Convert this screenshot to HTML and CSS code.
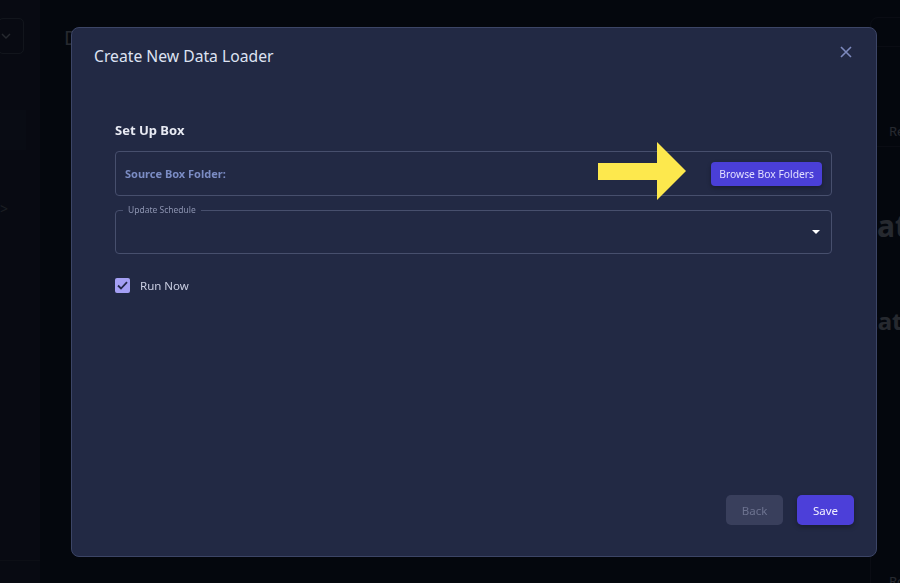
FILE: index.html
```html
<!DOCTYPE html>
<html lang="en">

<head>
    <meta charset="UTF-8">
    <meta name="viewport" content="width=device-width, initial-scale=1.0">
    <title>Data Loaders</title>
    <link rel="stylesheet" href="styles.css">
</head>

<body>
    <!-- page behind the dialog -->
    <div class="app">
        <aside class="sidebar">
            <div class="side-select">
                <svg width="10" height="10" viewBox="0 0 10 10"><path d="M1 3 L5 7 L9 3" fill="none" stroke="#c8ccd8" stroke-width="1.4"/></svg>
            </div>
            <div class="side-item"></div>
            <div class="side-arrow">&gt;</div>
            <div class="side-line"></div>
        </aside>
        <main class="main">
            <h2 class="page-title">Data Loaders</h2>
            <div class="content">
                <div class="left-area"></div>
                <div class="panel">
                    <div class="panel-head"></div>
                    <div class="panel-tab">Recent</div>
                    <div class="panel-big">Data</div>
                    <div class="panel-big second">Static</div>
                    <div class="panel-foot">Rows per page</div>
                </div>
            </div>
        </main>
    </div>

    <div class="backdrop"></div>

    <div class="modal">
        <div class="modal-header">
            <h1>Create New Data Loader</h1>
            <button class="close-btn" aria-label="close">
                <svg width="12" height="12" viewBox="0 0 12 12"><path d="M1 1 L11 11 M11 1 L1 11" stroke="#7d89bd" stroke-width="1.6"/></svg>
            </button>
        </div>

        <div class="modal-body">
            <div class="section-title">Set Up Box</div>

            <div class="source-box">
                <span class="source-label">Source Box Folder:</span>
                <button class="browse-btn">Browse Box Folders</button>
                <!-- 안내 화살표 -->
                <svg class="pointer" width="89" height="59" viewBox="0 0 89 59"><polygon points="0,21 59,21 59,0 88,29 59,58 59,38 0,38" fill="#fde84d"/></svg>
            </div>

            <div class="schedule">
                <span class="schedule-label">Update Schedule</span>
                <span class="caret"></span>
            </div>

            <label class="run-now">
                <span class="checkbox">
                    <svg width="11" height="9" viewBox="0 0 11 9"><path d="M1 4.5 L4 7.5 L10 1.2" fill="none" stroke="#23294a" stroke-width="1.8"/></svg>
                </span>
                Run Now
            </label>
        </div>

        <div class="modal-footer">
            <button class="btn back" disabled>Back</button>
            <button class="btn save">Save</button>
        </div>
    </div>
</body>

</html>
```

FILE: styles.css
```css
body {
    margin: 0;
    padding: 0;
    background-color: #0f1320;
    font-family: "Noto Sans", "Open Sans", sans-serif;
    overflow: hidden;
    height: 583px;
}

/* background page */
.app {
    display: flex;
    width: 1200px;
    height: 583px;
}

.sidebar {
    width: 40px;
    flex-shrink: 0;
    background-color: #222638;
    display: flex;
    flex-direction: column;
    padding-top: 18px;
    box-sizing: border-box;
}

.side-select {
    width: 26px;
    height: 36px;
    margin-left: -2px;
    border: 1px solid #5a6070;
    border-radius: 5px;
    display: flex;
    align-items: center;
    padding-left: 2px;
    box-sizing: border-box;
}

.side-item {
    height: 40px;
    margin-top: 56px;
    width: 26px;
    background: #2a2e42;
}

.side-arrow {
    margin-top: 49px;
    margin-left: 0;
    color: #8a8e9a;
    font-size: 14px;
}

.side-line {
    margin-top: auto;
    margin-bottom: 22px;
    height: 1px;
    background: #3c4050;
}

.main {
    flex: 1;
    padding: 24px 0 0 24px;
}

.page-title {
    margin: 0;
    font-size: 20px;
    font-weight: 400;
    color: #c8ccd8;
}

.content {
    display: flex;
    gap: 16px;
    margin-top: -34px;
}

.left-area {
    width: 790px;
    flex-shrink: 0;
}

.panel {
    width: 300px;
    height: 572px;
    flex-shrink: 0;
    border: 1px solid #2c3040;
    border-radius: 8px;
    display: flex;
    flex-direction: column;
    padding-left: 18px;
    color: #c8ccd8;
}

.panel-head {
    height: 28px;
    border-bottom: 1px solid #2c3040;
    margin-left: -18px;
}

.panel-tab {
    margin-top: 75px;
    font-size: 13px;
    line-height: 18px;
    padding-bottom: 6px;
    border-bottom: 1px solid #2c3040;
    margin-left: -18px;
    padding-left: 18px;
}

.panel-big {
    margin-top: 58px;
    font-size: 30px;
    font-weight: 700;
    margin-left: -34px;
}

.panel-big.second {
    margin-top: 58px;
    font-size: 24px;
    margin-left: -35px;
}

.panel-foot {
    margin-top: auto;
    font-size: 13px;
    line-height: 18px;
}

.backdrop {
    position: fixed;
    inset: 0;
    background-color: rgba(3, 5, 10, 0.82);
}

/* dialog */
.modal {
    position: absolute;
    top: 27px;
    left: 71px;
    width: 806px;
    height: 530px;
    box-sizing: border-box;
    background-color: #222944;
    border: 1px solid #3c4566;
    border-radius: 8px;
    display: flex;
    flex-direction: column;
}

.modal-header {
    display: flex;
    justify-content: space-between;
    align-items: center;
    padding: 16px 22px 0 22px;
}

.modal-header h1 {
    margin: 0;
    font-size: 15.7px;
    line-height: 24px;
    font-weight: 400;
    color: #dde2f2;
}

.close-btn {
    background: none;
    border: none;
    padding: 0;
    margin-right: 2px;
    margin-top: -8px;
    cursor: pointer;
    display: flex;
}

.modal-body {
    flex: 1;
    padding: 53px 44px 0 43px;
    display: flex;
    flex-direction: column;
}

.section-title {
    font-size: 13px;
    line-height: 18px;
    font-weight: 700;
    color: #e8eaf3;
}

.source-box {
    position: relative;
    margin-top: 12px;
    height: 45px;
    box-sizing: border-box;
    border: 1px solid #474f6d;
    border-radius: 4px;
    display: flex;
    align-items: center;
    justify-content: space-between;
    padding: 0 9px 0 9px;
}

.source-label {
    font-size: 11px;
    font-weight: 700;
    color: #7b8cc4;
}

.browse-btn {
    background-color: #4a3fd7;
    color: #e2dfff;
    border: none;
    border-radius: 4px;
    height: 24px;
    padding: 0 8px;
    font-family: inherit;
    font-size: 10.3px;
    box-shadow: 0 2px 4px rgba(0, 0, 0, 0.3);
    cursor: pointer;
}

.pointer {
    position: absolute;
    left: 482px;
    top: -10px;
}

.schedule {
    position: relative;
    margin-top: 14px;
    height: 44px;
    box-sizing: border-box;
    border: 1px solid #474f6d;
    border-radius: 4px;
    padding: 0 11px 0 0;
    display: flex;
    align-items: center;
    justify-content: flex-end;
}

/* 테두리 위에 걸친 라벨 */
.schedule-label {
    position: absolute;
    top: -6px;
    left: 7px;
    padding: 0 5px;
    font-size: 8.5px;
    line-height: 10px;
    color: #8c93b0;
    background-color: #222944;
}

.caret {
    width: 0;
    height: 0;
    border-left: 4px solid transparent;
    border-right: 4px solid transparent;
    border-top: 4px solid #ffffff;
}

.run-now {
    margin-top: 24px;
    display: flex;
    align-items: center;
    gap: 10px;
    font-size: 11.5px;
    color: #c9cde1;
}

.checkbox {
    width: 15px;
    height: 15px;
    border-radius: 2px;
    background-color: #a49ff4;
    display: flex;
    align-items: center;
    justify-content: center;
}

.modal-footer {
    display: flex;
    justify-content: flex-end;
    gap: 14px;
    padding: 0 22px 31px 0;
}

.btn {
    width: 57px;
    height: 30px;
    border: none;
    border-radius: 5px;
    font-family: inherit;
    font-size: 11.5px;
    cursor: pointer;
}

.back {
    background-color: #393f5c;
    color: #6d7390;
}

.save {
    background-color: #4c3fd9;
    color: #f2f0ff;
    box-shadow: 0 2px 5px rgba(0, 0, 0, 0.3);
}
```
